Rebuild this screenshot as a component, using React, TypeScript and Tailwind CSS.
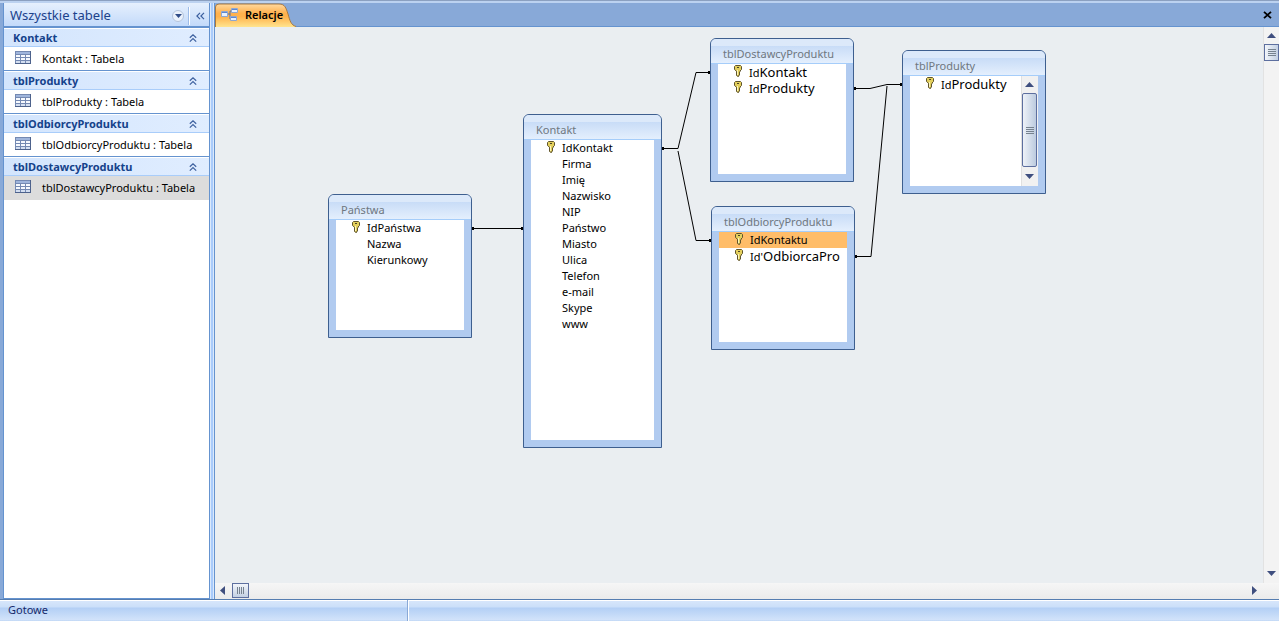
import type { ReactNode } from "react";

type Field = { id: string; label: ReactNode; isKey?: boolean; selected?: boolean };

type TableNode = {
  title: string;
  place: string;
  fields: Field[];
  scroll?: boolean;
};

const groups = [
  { name: "Kontakt", selected: false },
  { name: "tblProdukty", selected: false },
  { name: "tblOdbiorcyProduktu", selected: false },
  { name: "tblDostawcyProduktu", selected: true },
];

const big = "text-[13px]";

const nodes: TableNode[] = [
  {
    title: "Państwa",
    place: "left-[113px] top-[167px] w-36 h-36",
    fields: [
      { id: "idp", label: "IdPaństwa", isKey: true },
      { id: "nazwa", label: "Nazwa" },
      { id: "kier", label: "Kierunkowy" },
    ],
  },
  {
    title: "Kontakt",
    place: "left-[308px] top-[87px] w-[139px] h-[334px]",
    fields: [
      { id: "idk", label: "IdKontakt", isKey: true },
      { id: "firma", label: "Firma" },
      { id: "imie", label: "Imię" },
      { id: "nazwisko", label: "Nazwisko" },
      { id: "nip", label: "NIP" },
      { id: "panstwo", label: "Państwo" },
      { id: "miasto", label: "Miasto" },
      { id: "ulica", label: "Ulica" },
      { id: "telefon", label: "Telefon" },
      { id: "email", label: "e-mail" },
      { id: "skype", label: "Skype" },
      { id: "www", label: "www" },
    ],
  },
  {
    title: "tblDostawcyProduktu",
    place: "left-[495px] top-[11px] w-36 h-36",
    fields: [
      { id: "idk", label: <>Id<span className={big}>Kontakt</span></>, isKey: true },
      { id: "idp", label: <>Id<span className={big}>Produkty</span></>, isKey: true },
    ],
  },
  {
    title: "tblProdukty",
    place: "left-[687px] top-[23px] w-36 h-36",
    scroll: true,
    fields: [{ id: "idp", label: <>Id<span className={big}>Produkty</span></>, isKey: true }],
  },
  {
    title: "tblOdbiorcyProduktu",
    place: "left-[496px] top-[179px] w-36 h-36",
    fields: [
      { id: "idk", label: "IdKontaktu", isKey: true, selected: true },
      { id: "ido", label: <>Id'<span className={big}>OdbiorcaPro</span></>, isKey: true },
    ],
  },
];

function TableIcon() {
  return (
    <svg width="16" height="13" viewBox="0 0 16 13" shapeRendering="crispEdges" aria-hidden="true">
      <rect width="16" height="13" fill="#4d628c" />
      <rect width="15" height="12" fill="#7489b2" />
      <rect x="1" y="1" width="14" height="2" fill="#9fb5dc" />
      {[4, 7, 10].map((y) =>
        [1, 6, 11].map((x) => (
          <rect key={`${x}-${y}`} x={x} y={y} width="4" height="2" fill={y === 10 ? "#d3def0" : "#f6f9fe"} />
        ))
      )}
    </svg>
  );
}

function KeyIcon() {
  return (
    <svg width="8" height="12" viewBox="0 0 8 12" aria-hidden="true">
      <path
        d="M1.500.5h5l1 1v3l-1.500 1.500v1l-1 1 1 1-1 1v1l-1 .5-1.500-1V6.200L.5 4.500v-3z"
        fill="#e3cf5c"
        stroke="#5f542c"
        strokeWidth="1"
      />
      <path d="M3.500 5v5" stroke="#fbf5bb" strokeWidth="1" />
      <path d="M3 2.500h2" stroke="#4a4226" strokeWidth="1" />
    </svg>
  );
}

function CollapseIcon() {
  return (
    <svg width="8" height="8" viewBox="0 0 8 8" fill="none" stroke="#3f62a0" strokeWidth="1.2" aria-hidden="true">
      <path d="M.8 3.800 4 .8l3.200 3M.8 7.600 4 4.600l3.200 3" />
    </svg>
  );
}

function Arrow({ dir }: { dir: "up" | "down" | "left" | "right" }) {
  const shapes = {
    up: "M0 5 4.500 0 9 5z",
    down: "M0 0h9L4.500 5z",
    left: "M5 0v9L0 4.500z",
    right: "M0 0v9l5-4.500z",
  };
  const flat = dir === "up" || dir === "down";
  return (
    <svg width={flat ? 9 : 5} height={flat ? 5 : 9} viewBox={flat ? "0 0 9 5" : "0 0 5 9"} aria-hidden="true">
      <path d={shapes[dir]} fill="#3f4f7f" />
    </svg>
  );
}

function NavigationPane() {
  return (
    <nav aria-label="Tabele" className="flex w-[207px] shrink-0 flex-col border-x border-b border-[#6593cf] bg-white">
      <div className="flex h-[25px] shrink-0 items-center border-b-2 border-[#6593cf] bg-gradient-to-b from-[#e6f0fd] to-[#c3dafa] pt-0.5 pl-1.5 text-[#1c428b]">
        <h1 className="grow text-[13px]">Wszystkie tabele</h1>
        <button
          type="button"
          aria-label="Wybierz kategorię"
          className="mr-1 flex size-3 items-center justify-center rounded-full border border-[#b4c4dc] bg-[#eaf1fb]"
        >
          <svg width="7" height="4" viewBox="0 0 7 4" aria-hidden="true">
            <path d="M0 0h7L3.500 4z" fill="#2f4c88" />
          </svg>
        </button>
        <span className="h-[18px] w-0.5 border-l border-[#9dbce8] bg-white" />
        <button type="button" aria-label="Zwiń okienko" className="flex w-[19px] items-center justify-end pr-1">
          <svg width="9" height="8" viewBox="0 0 9 8" fill="none" stroke="#3b5f9f" strokeWidth="1.2" aria-hidden="true">
            <path d="M4 .8.900 4 4 7.200M8 .8 4.900 4 8 7.200" />
          </svg>
        </button>
      </div>
      {groups.map((g) => (
        <section key={g.name} className={g.selected ? "" : "border-b border-[#6593cf]"}>
          <h2>
            <button
              type="button"
              className="flex h-[19px] w-full items-center justify-between border-t border-b border-t-white border-b-[#a9cdfa] bg-gradient-to-r from-[#d3e5fd] to-[#e0edff] pt-px pr-3 pl-[9px] text-[11px] font-bold text-[#15428b]"
            >
              {g.name}
              <CollapseIcon />
            </button>
          </h2>
          <a
            href="#"
            className={
              g.selected
                ? "flex h-6 items-start gap-[11px] bg-[#dcdcdc] pt-1 pl-[11px] text-[11px] leading-4"
                : "flex h-[23px] items-start gap-[11px] bg-white pt-1 pl-[11px] text-[11px] leading-4"
            }
          >
            <TableIcon />
            {g.name} : Tabela
          </a>
        </section>
      ))}
    </nav>
  );
}

function NodeScrollbar() {
  return (
    <div className="flex w-[17px] shrink-0 flex-col items-center border-l border-[#e0e0e0] bg-[#f1f1f1] pr-px">
      <button type="button" aria-label="Przewiń w górę" className="flex h-[17px] items-center justify-center">
        <Arrow dir="up" />
      </button>
      <div className="flex w-full grow items-center justify-center rounded-xs border border-[#5d6f9f] bg-gradient-to-r from-[#eef2f8] to-[#bccbdf]">
        <div className="h-[7px] w-2 bg-[repeating-linear-gradient(to_bottom,#76828f_0_1px,transparent_1px_2px)]" />
      </div>
      <button type="button" aria-label="Przewiń w dół" className="flex h-[19px] items-center justify-center">
        <Arrow dir="down" />
      </button>
    </div>
  );
}

function DiagramTable({ node }: { node: TableNode }) {
  return (
    <article
      className={`absolute flex flex-col rounded-t-md border border-[#3e5f8f] bg-[#b1cbf0] ${node.place}`}
    >
      <h3 className="h-[25px] shrink-0 rounded-t-[5px] border-b border-[#a5cdfa] bg-[linear-gradient(to_bottom,#dce9fa_0_7px,#c8dcf7_7px,#e4effd)] pl-3 pt-[5px] text-[11px] leading-5 text-[#6f7780]">
        {node.title}
      </h3>
      <div className="mx-[7px] mb-[7px] flex min-h-0 grow bg-white">
        <ul className="grow text-[11px] whitespace-nowrap">
          {node.fields.map((f) => (
            <li key={f.id} className={f.selected ? "flex h-4 items-start bg-[#ffbd69]" : "flex h-4 items-start"}>
              <span className="w-[31px] shrink-0 pt-px pl-4">{f.isKey && <KeyIcon />}</span>
              <span className="leading-4">{f.label}</span>
            </li>
          ))}
        </ul>
        {node.scroll && <NodeScrollbar />}
      </div>
    </article>
  );
}

function Relationships() {
  return (
    <svg className="absolute inset-0 size-full" fill="none" stroke="#000" strokeWidth="1" aria-hidden="true">
      <path d="M257 201.500h51" />
      <path d="M447 121.500h16L481 45.500h14M463 124 481 213.500h15" />
      <path d="M639 61.500h16l17-4h15M672 59 656 229.500h-16" />
      <g fill="#000" stroke="none">
        <path d="M257 200h2v3h-2zM306 200h2v3h-2zM447 120h2v3h-2zM493 44h2v3h-2zM494 212h2v3h-2zM639 60h2v3h-2zM685 56h2v3h-2zM640 228h2v3h-2z" />
      </g>
    </svg>
  );
}

function DocumentTabs() {
  return (
    <div className="flex h-6 shrink-0 items-center justify-between border-b border-[#6593cf] bg-[#88a9d8] pr-1.5">
      <button type="button" className="relative flex h-full w-20 items-center gap-[7px] pt-px pl-1.5 text-[11px] font-semibold">
        <svg className="absolute top-0 left-0" width="82" height="24" viewBox="0 0 82 24" aria-hidden="true">
          <defs>
            <linearGradient id="tab" x1="0" y1="0" x2="0" y2="1">
              <stop offset="0" stopColor="#ffd9a0" />
              <stop offset="0.4" stopColor="#ffb14e" />
              <stop offset="0.55" stopColor="#ffb24c" />
              <stop offset="1" stopColor="#ffe48f" />
            </linearGradient>
          </defs>
          <path d="M.5 24V4Q.5 1 4 1H64C70 1 71 5 73 11 75 18 76 22 81 23.500V24z" fill="url(#tab)" />
          <path d="M.5 24V4Q.5 1 4 1H64C70 1 71 5 73 11 75 18 76 22 81 23.500" fill="none" stroke="#a9793f" />
        </svg>
        <svg className="relative" width="17" height="14" viewBox="0 0 17 14" aria-hidden="true">
          <path d="M6 6h3M9 3v8M9 3h2M9 11h2" fill="none" stroke="#5873a5" />
          <g fill="#e8f1ff" stroke="#8ea6cf">
            <path d="M.5 3.500h6v5h-6zM10.500.5h6v4h-6zM9.500 8.500h6v4h-6z" />
          </g>
          <path d="M1 4h5v1H1zM11 1h5v1h-5zM10 9h5v1h-5z" fill="#5e86cf" />
        </svg>
        <span className="relative">Relacje</span>
      </button>
      <button type="button" aria-label="Zamknij" className="p-px">
        <svg width="9" height="8" viewBox="0 0 9 8" stroke="#000" strokeWidth="1.800" aria-hidden="true">
          <path d="M1 .8 8 7.200M8 .8 1 7.200" />
        </svg>
      </button>
    </div>
  );
}

export default function App() {
  return (
    <div className="flex h-screen flex-col bg-[#88a9d8] font-['Noto_Sans',sans-serif] text-black">
      <div className="h-[3px] shrink-0 border-t border-[#8ba0c0] bg-[#bcd2f0]" />
      <div className="flex min-h-0 grow pl-[3px]">
        <NavigationPane />
        <div className="w-1 shrink-0 border-x border-x-[#dbe9fc] bg-[#a9cbfb]" />
        <main className="flex min-w-0 grow flex-col border-l border-[#6593cf]">
          <DocumentTabs />
          <div className="flex min-h-0 grow">
            <div className="relative grow overflow-hidden bg-[#eaeef1]">
              <Relationships />
              {nodes.map((n) => (
                <DiagramTable key={n.title} node={n} />
              ))}
            </div>
            <div className="flex w-4 shrink-0 flex-col items-center border-l border-[#e2e2e2] bg-[#f3f3f3]">
              <button type="button" aria-label="W górę" className="flex h-[17px] items-center">
                <Arrow dir="up" />
              </button>
              <div className="flex h-[17px] w-full items-center justify-center border border-[#5d6f9f] bg-gradient-to-r from-[#f2f5fa] to-[#c3d0e3]">
                <div className="h-[7px] w-2 bg-[repeating-linear-gradient(to_bottom,#76828f_0_1px,transparent_1px_2px)]" />
              </div>
              <button type="button" aria-label="W dół" className="mt-auto flex h-[19px] items-center">
                <Arrow dir="down" />
              </button>
            </div>
          </div>
          <div className="flex h-4 shrink-0 items-center bg-gradient-to-b from-[#f6f6f6] to-[#ebebeb] pr-[22px] pb-px pl-[5px]">
            <button type="button" aria-label="W lewo" className="flex w-3">
              <Arrow dir="left" />
            </button>
            <div className="flex h-[15px] w-[17px] items-center justify-center border border-[#5d6f9f] bg-gradient-to-b from-[#f2f5fa] to-[#c3d0e3]">
              <div className="h-[7px] w-[7px] bg-[repeating-linear-gradient(to_right,#76828f_0_1px,transparent_1px_2px)]" />
            </div>
            <button type="button" aria-label="W prawo" className="ml-auto flex">
              <Arrow dir="right" />
            </button>
          </div>
        </main>
      </div>
      <footer className="flex h-[22px] shrink-0 items-stretch border-t border-[#567db0] bg-[linear-gradient(to_bottom,#ffffff_0_1px,#d7e6fb_1px,#cbdff9_7px,#b3cff5_8px,#d2e3fa_20px,#b9d2f3_21px)] text-[11px] text-[#15296b]">
        <p className="flex w-[408px] items-center border-r border-[#8aa9d6] pl-2">Gotowe</p>
        <div className="grow border-l border-white" />
      </footer>
    </div>
  );
}
